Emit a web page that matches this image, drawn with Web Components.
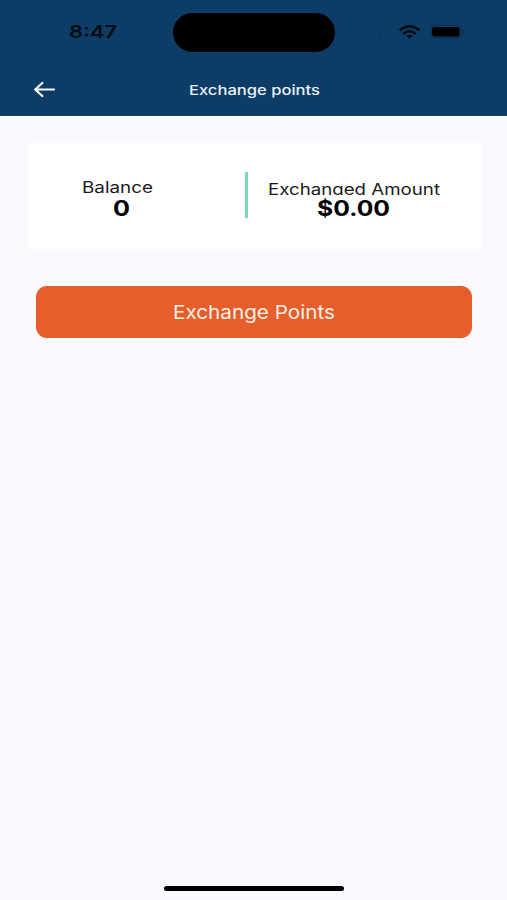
<!DOCTYPE html>
<html lang="en">
<head>
<meta charset="utf-8">
<title>Exchange points</title>
<style>
html,body{margin:0;height:100%;background:#f9f9fe}
body{font-family:Inter,"Liberation Sans",sans-serif;overflow:hidden}
</style>
</head>
<body>
<points-screen></points-screen>
<script>
const define=(name,html,init)=>customElements.define(name,class extends HTMLElement{
  connectedCallback(){
    if(this.shadowRoot)return;
    const t=document.createElement('template');
    t.innerHTML=html;
    this.attachShadow({mode:'open'}).append(t.content.cloneNode(true));
    if(init)init(this);
  }
});

// Wide lettering: stretches its text horizontally to the width attribute.
define('wide-text',`<style>
:host{display:block;flex:none;white-space:nowrap;text-align:left}
span{display:inline-block;transform-origin:0 50%}
</style><span><slot></slot></span>`,el=>{
  const w=+el.getAttribute('width'),s=el.shadowRoot.querySelector('span');
  el.style.width=w+'px';
  s.style.transform='scaleX('+w/s.getBoundingClientRect().width+')';
});

define('status-bar',`<style>
:host{display:grid;grid-template-columns:173px 162px 1fr;height:64px;color:#020a12}
.time{padding:21px 0 0 69px;font-size:17.5px;font-weight:600;line-height:22px}
.island{margin-top:13px;height:39px;border-radius:20px;background:#000}
svg{display:block;width:172px;height:64px}
</style>
<div class="time"><wide-text width="48">8:47</wide-text></div>
<div class="island"></div>
<svg viewBox="335 0 172 64">
<g fill="#08325a" opacity=".75"><circle cx="366" cy="36" r="1.3"/><circle cx="373" cy="36" r="1.3"/><circle cx="380" cy="36" r="1.3"/><circle cx="387" cy="36" r="1.3"/></g>
<g fill="none" stroke="#020a12" stroke-width="2.5"><path d="M399.7 30.3Q409.5 22.2 419.3 30.3"/><path d="M403.2 34Q409.5 28.6 415.8 34"/></g>
<path fill="#020a12" d="M406.3 35.9Q409.5 33.5 412.7 35.9L409.5 38.6Z"/>
<rect x="430.4" y="25.4" width="30.8" height="12.6" rx="4" fill="none" stroke="#082d4d" stroke-width="1"/>
<rect x="432" y="27" width="27.6" height="9.5" rx="2.8" fill="#000"/>
<path d="M462.5 29.6q2.2 2.1 0 4.2z" fill="#082d4d"/>
</svg>`);

define('nav-bar',`<style>
:host{display:flex;height:52px;color:#eaf1f8;font-size:13px;font-weight:500;line-height:18px;box-sizing:border-box;border-bottom:1px solid #1f4468}
svg{flex:none;width:22px;height:18px;margin:17px 0 0 34px}
wide-text{margin:17px 0 0 132.5px}
</style>
<svg viewBox="34 81 22 18" fill="none" stroke="#fff" stroke-width="2.2" stroke-linecap="round" stroke-linejoin="round"><path d="M54 89.5H35.5M42.3 83L35.2 89.5L42.3 96"/></svg>
<wide-text width="131"><slot></slot></wide-text>`);

define('points-figure',`<style>
:host{display:flex;flex-direction:column;align-items:center;color:#1a1a1a}
.label{height:var(--clip,18px);margin-top:var(--top);font-size:15.5px;line-height:18px;overflow:hidden;margin-right:var(--shift,0)}
.value{height:20px;margin-top:var(--gap,0);font-size:21px;font-weight:700;line-height:20px;color:#000}
</style><div class="label"><slot name="label"></slot></div><div class="value"><slot></slot></div>`);

define('points-card',`<style>
:host{display:grid;grid-template-columns:217px 2.5px 1fr;height:106px;margin:27px 26px 0 28px;background:#fff;border-radius:4px}
.rule{height:46px;margin-top:29px;background:#7fd8b5}
</style><slot name="balance"></slot><div class="rule"></div><slot name="amount"></slot>`);

define('action-button',`<style>
:host{display:block;margin:37px 35px 0 36px}
button{display:flex;justify-content:center;align-items:center;width:100%;height:52px;margin:0;padding:0;border:0;border-radius:11px;background:#e65e2c;color:#fff0e4;font:400 18.5px/24px Inter,sans-serif}
</style><button><wide-text width="162"><slot></slot></wide-text></button>`);

define('home-indicator',`<style>
:host{display:block;width:180px;height:5px;border-radius:3px;background:#000;margin:auto auto 9px 164px}
</style>`);

define('points-screen',`<style>
:host{display:flex;flex-direction:column;width:507px;height:900px;background:#f9f9fe}
header{height:116px;background:#0d3d66}
.balance{padding-right:31px;--top:36px;--shift:8px;--gap:2px}
.amount{padding-right:21.5px;--top:38px;--clip:14px;--gap:4px}
</style>
<header><status-bar></status-bar><nav-bar>Exchange points</nav-bar></header>
<points-card>
<points-figure class="balance" slot="balance"><wide-text slot="label" width="71">Balance</wide-text><wide-text width="17">0</wide-text></points-figure>
<points-figure class="amount" slot="amount"><wide-text slot="label" width="172">Exchanged Amount</wide-text><wide-text width="73">$0.00</wide-text></points-figure>
</points-card>
<action-button>Exchange Points</action-button>
<home-indicator></home-indicator>`);
</script>
</body>
</html>
